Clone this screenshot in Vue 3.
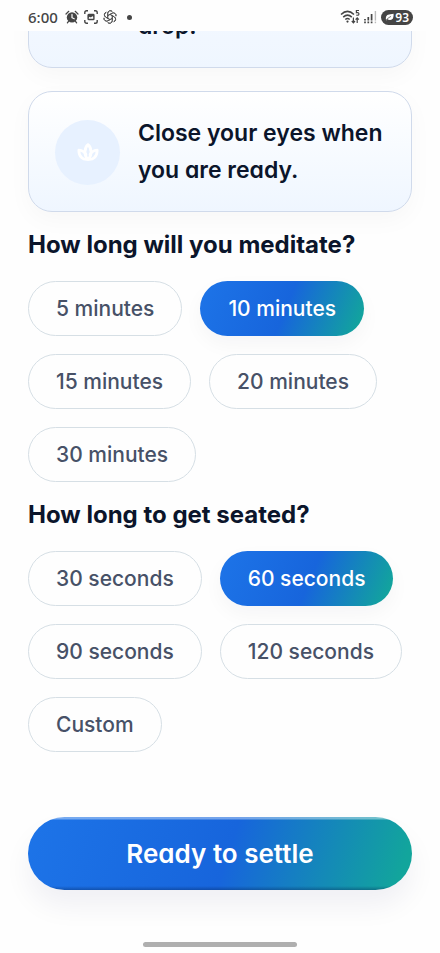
<script setup>
import { ref } from 'vue'

const groups = [
  {
    id: 'duration',
    title: 'How long will you meditate?',
    options: ['5 minutes', '10 minutes', '15 minutes', '20 minutes', '30 minutes'],
    selected: ref('10 minutes'),
  },
  {
    id: 'seated',
    title: 'How long to get seated?',
    options: ['30 seconds', '60 seconds', '90 seconds', '120 seconds', 'Custom'],
    selected: ref('60 seconds'),
  },
]

const petals = [0, 60, 120, 180, 240, 300]
</script>

<template>
  <div class="screen">
    <header class="status">
      <div class="status-side">
        <span class="clock">6:00</span>
        <svg class="glyph" viewBox="0 0 14 14" aria-hidden="true">
          <circle cx="7" cy="7.4" r="5.2" fill="#454545" />
          <path d="M1 4 3.8 1.3M13 4 10.2 1.3" stroke="#454545" stroke-width="1.2" stroke-linecap="round" />
          <path d="M3.5 11.4 2.4 12.8M10.5 11.4l1.1 1.4" stroke="#454545" stroke-width="1.3" stroke-linecap="round" />
          <path d="M7 4.4v3.3l2.2 1.1" fill="none" stroke="#fff" stroke-width="1.2" stroke-linecap="round" />
        </svg>
        <svg class="glyph" viewBox="0 0 14 14" fill="none" stroke="#454545" stroke-width="1.4" aria-hidden="true">
          <path d="M.8 4V2.6Q.8.8 2.6.8H4M10 .8h1.4q1.8 0 1.8 1.8V4M13.2 10v1.4q0 1.8-1.8 1.8H10M4 13.2H2.6Q.8 13.2.8 11.4V10" />
          <rect x="4.1" y="4.5" width="5.8" height="5" rx=".6" />
          <path d="M4 4.500h6V7L8.400 6.200 6.800 7.400 5.800 6.800 4 8Z" fill="#454545" stroke="none" />
        </svg>
        <svg class="glyph" viewBox="-8 -8 16 16" fill="none" stroke="#505050" stroke-width="1" aria-hidden="true">
          <path
            v-for="angle in petals"
            :key="angle"
            :transform="`rotate(${angle})`"
            d="M-2.600 1.500V-4.300A3.100 3.100 0 0 1 2.600-6.500M-2.600-1.500 2.400-4.400A3.100 3.100 0 0 1 6.700-.9"
          />
        </svg>
        <span class="dot"></span>
      </div>
      <div class="status-side right">
        <svg class="wifi" viewBox="0 0 20 16" fill="none" stroke="#454545" stroke-width="1.5" aria-hidden="true">
          <path d="M1 5.5Q7.5-.8 14 5.5M3.2 8.1q4.3-4 8.6 0M5.3 10.5q2.2-2 4.4 0" />
          <circle cx="7.5" cy="12.6" r="1.1" fill="#454545" stroke="none" />
          <path d="M19 1.5h-2.6v2.2q2.5-.5 2.5 1.2 0 1.8-2.6 1.2" stroke-width="1.2" />
          <path d="M13.4 8.5v5M11.8 12l1.6 1.8L15 12M17.2 14V9M15.6 10.6l1.6-1.8 1.6 1.8" stroke-width="1.2" />
        </svg>
        <svg class="signal" viewBox="0 0 13 14" aria-hidden="true">
          <path d="M1 9v1.6M4.3 7v3.6M7.6 4v6.6" stroke="#454545" stroke-width="1.7" />
          <path d="M11.4 1v9.6" stroke="#bbb" stroke-width="1.4" />
          <path d="M1 11.6v1.6M4.3 11.6v1.6M7.6 11.6v1.6" stroke="#454545" stroke-width="1.7" />
          <path d="M11.4 11.6v1.6" stroke="#bbb" stroke-width="1.4" />
        </svg>
        <span class="battery">
          <svg class="leaf" viewBox="0 0 9 8" aria-hidden="true">
            <path d="M1 7.400Q0 2 4 1.400L8.600.8Q9 7 5.200 7 3.400 7.200 2.400 6L1.200 7.600Z" fill="#fff" />
            <path d="M.6 7.600Q3 4.600 6 3.400" fill="none" stroke="#454545" stroke-width=".7" />
          </svg>
          93
        </span>
      </div>
    </header>

    <main class="content">
      <div class="cards">
        <article class="card tail"><p>drop.</p></article>
        <article class="card">
          <span class="badge">
            <svg viewBox="0 0 24 24" fill="none" stroke="#fff" stroke-width="3" stroke-linejoin="round" aria-hidden="true">
              <path d="M12 20C7.6 16.4 7.6 7.6 12 4c4.400 3.600 4.400 12.400 0 16Z" />
              <path d="M12 20C6.500 21 2 17 2 10c3.500 0 7 2.500 8 6M12 20c5.500 1 10-3 10-10-3.500 0-7 2.500-8 6" />
            </svg>
          </span>
          <p>Close your eyes when you are ready.</p>
        </article>
      </div>

      <section v-for="group in groups" :key="group.id" class="group" :aria-labelledby="group.id">
        <h2 :id="group.id">{{ group.title }}</h2>
        <div class="chips">
          <button
            v-for="option in group.options"
            :key="option"
            type="button"
            class="chip"
            :class="{ active: group.selected.value === option }"
            :aria-pressed="group.selected.value === option"
            @click="group.selected.value = option"
          >
            {{ option }}
          </button>
        </div>
      </section>

      <button type="button" class="cta">Ready to settle</button>
    </main>

    <div class="home"><span></span></div>
  </div>
</template>

<style>
body {
  margin: 0;
  background: #fefefe;
}
</style>

<style scoped>
.screen {
  min-height: 100vh;
  display: flex;
  flex-direction: column;
  overflow: hidden;
  background: #fefefe;
  color: #0b152b;
  font-family: Inter, "Noto Sans", sans-serif;
  font-feature-settings: "cv11";
}

.status {
  display: flex;
  justify-content: space-between;
  align-items: center;
  height: 31px;
  padding: 3px 27px 0 28px;
  box-sizing: border-box;
  background: #fefefe;
  z-index: 1;
}

.status-side {
  display: flex;
  align-items: center;
  gap: 5px;
}

.status-side.right {
  gap: 4px;
}

.clock {
  margin-right: 2px;
  font: 500 15px/20px "Noto Sans", sans-serif;
  color: #454545;
}

.glyph {
  width: 14px;
  height: 14px;
}

.dot {
  width: 5px;
  height: 5px;
  margin-left: 5px;
  border-radius: 50%;
  background: #454545;
}

.wifi {
  width: 20px;
  height: 16px;
}

.signal {
  width: 13px;
  height: 14px;
}

.battery {
  display: flex;
  align-items: center;
  gap: 1px;
  padding: 0 4px;
  border-radius: 8px;
  background: #454545;
  color: #fff;
  font: 600 12px/15px "Noto Sans", sans-serif;
}

.leaf {
  width: 9px;
  height: 8px;
}

.content {
  display: flex;
  flex-direction: column;
  gap: 17px;
  padding: 0 28px;
}

.cards {
  display: flex;
  flex-direction: column;
  gap: 23px;
  margin-top: -47px;
}

.card {
  display: flex;
  align-items: center;
  gap: 18px;
  padding: 23px 26px 22px;
  border: 1px solid #d0daeb;
  border-radius: 24px;
  background: linear-gradient(#ffffff, #eff6ff);
  box-shadow: 0 8px 24px rgba(15, 23, 42, 0.03);
}

.card p {
  margin: 0;
  font-size: 23px;
  font-weight: 600;
  line-height: 37px;
}

.tail {
  padding-left: 109px;
  background: linear-gradient(#f5f9ff, #eff6ff);
}

.badge {
  flex: none;
  display: grid;
  place-items: center;
  width: 65px;
  height: 65px;
  border-radius: 50%;
  background: #e7f1ff;
}

.badge svg {
  width: 24px;
  height: 22px;
}

.group {
  display: flex;
  flex-direction: column;
  gap: 20px;
}

h2 {
  margin: 0;
  font-size: 24px;
  font-weight: 700;
  line-height: 32px;
  font-feature-settings: normal;
}

.chips {
  display: flex;
  flex-wrap: wrap;
  gap: 18px;
}

.chip {
  height: 55px;
  padding: 0 27px;
  border: 1px solid #d6dfe5;
  border-radius: 28px;
  background: #fefefe;
  color: #475167;
  font: inherit;
  font-size: 21px;
  font-weight: 500;
}

.chip.active {
  padding: 0 28px;
  border: 0;
  background: linear-gradient(112deg, #1d74e8, #1765dc 52%, #12a59c 96%);
  color: #fff;
  box-shadow: 0 8px 20px rgba(15, 23, 42, 0.04);
}

.cta {
  height: 73px;
  margin-top: 48px;
  border: 0;
  border-radius: 37px;
  background:
    linear-gradient(rgba(255, 255, 255, 0.4) 2px, transparent 3px),
    linear-gradient(to top, rgba(0, 30, 80, 0.35), transparent 4px),
    linear-gradient(108deg, #1d74e8, #1765dc 52%, #12a59c 96%);
  color: #fff;
  font: inherit;
  font-size: 26px;
  font-weight: 600;
  box-shadow: 0 16px 28px rgba(15, 23, 82, 0.06);
}

.home {
  display: flex;
  justify-content: center;
  margin-top: auto;
  padding: 40px 0 6px;
}

.home span {
  width: 35%;
  height: 5px;
  border-radius: 3px;
  background: #afafaf;
}
</style>
